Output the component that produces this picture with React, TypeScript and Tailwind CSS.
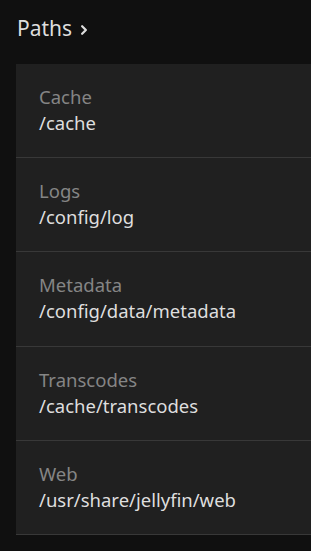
const PATHS = [
  { label: 'Cache', value: '/cache' },
  { label: 'Logs', value: '/config/log' },
  { label: 'Metadata', value: '/config/data/metadata' },
  { label: 'Transcodes', value: '/cache/transcodes' },
  { label: 'Web', value: '/usr/share/jellyfin/web' },
];

export default function App() {
  return (
    <div
      className="min-h-[551px] w-[311px] overflow-hidden bg-[#101010] text-[#dedede]"
      style={{ fontFamily: '"Noto Sans", sans-serif' }}
    >
      <div className="flex items-center gap-[3px] pl-[17px] pt-[15px] h-[41px]">
        <span className="text-[21px] leading-[26px]">Paths</span>
        <svg viewBox="0 0 24 24" className="h-[18px] w-[18px] mt-[3px]" fill="none" stroke="currentColor" strokeWidth="3" strokeLinecap="round" strokeLinejoin="round">
          <path d="M9.5 7l5 5-5 5" />
        </svg>
      </div>

      <div className="mt-[23px] ml-4 bg-[#202020]">
        {PATHS.map((p) => (
          <div key={p.label} className="border-b border-[#383838] pl-[23px] pt-[20px] pb-[21.2px] text-[18.5px] leading-[26px]">
            <div className="text-[#858585]">{p.label}</div>
            <div className="text-[#dedede]">{p.value}</div>
          </div>
        ))}
      </div>
    </div>
  );
}
